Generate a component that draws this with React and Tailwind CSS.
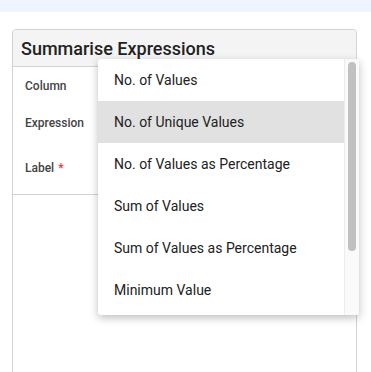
import React from "react";

const options = [
  "No. of Values",
  "No. of Unique Values",
  "No. of Values as Percentage",
  "Sum of Values",
  "Sum of Values as Percentage",
  "Minimum Value",
];

const App = () => {
  return (
    <div className="relative h-[372px] overflow-hidden bg-white font-['Roboto',sans-serif]">
      <div className="h-3 bg-[#eef5fe]" />
      <div className="px-3 pt-[17px]">
        <div className="h-[400px] w-[345px] rounded-t border border-[#d3d3d3]">
          <div className="flex h-[37px] items-center border-b border-[#d3d3d3] bg-[#f4f4f4] pl-2 rounded-t">
            <h1 className="text-[18px] font-medium text-[#222]">Summarise Expressions</h1>
          </div>
          <div className="border-b border-[#d3d3d3]">
            <div className="flex h-[37px] items-center pl-3 text-[12px] font-medium text-[#444]">Column</div>
            <div className="flex h-[37px] items-center pl-3 text-[12px] font-medium text-[#444]">Expression</div>
            <div className="flex h-[53px] items-center pl-3 text-[12px] font-medium text-[#444]">
              Label <span className="ml-1 text-[#e53935]">*</span>
            </div>
          </div>
        </div>
      </div>

      {/* dropdown menu */}
      <div className="absolute left-[98px] top-[59px] flex h-[256px] w-[261px] overflow-hidden rounded-[3px] bg-white shadow-[0_3px_8px_rgba(0,0,0,0.25)]">
        <ul className="flex-1">
          {options.map((opt, i) => (
            <li
              key={opt}
              className={`flex h-[42px] items-center pl-4 text-[14px] text-[#212121] ${i === 1 ? "bg-[#e1e1e1]" : ""}`}
            >
              {opt}
            </li>
          ))}
        </ul>
        <div className="w-[15px] border-l border-[#ececec] bg-[#fafafa] pl-[3px] pt-[3px]">
          <div className="h-[189px] w-[8px] rounded-full bg-[#c1c1c1]" />
        </div>
      </div>
    </div>
  );
};

export default App;
